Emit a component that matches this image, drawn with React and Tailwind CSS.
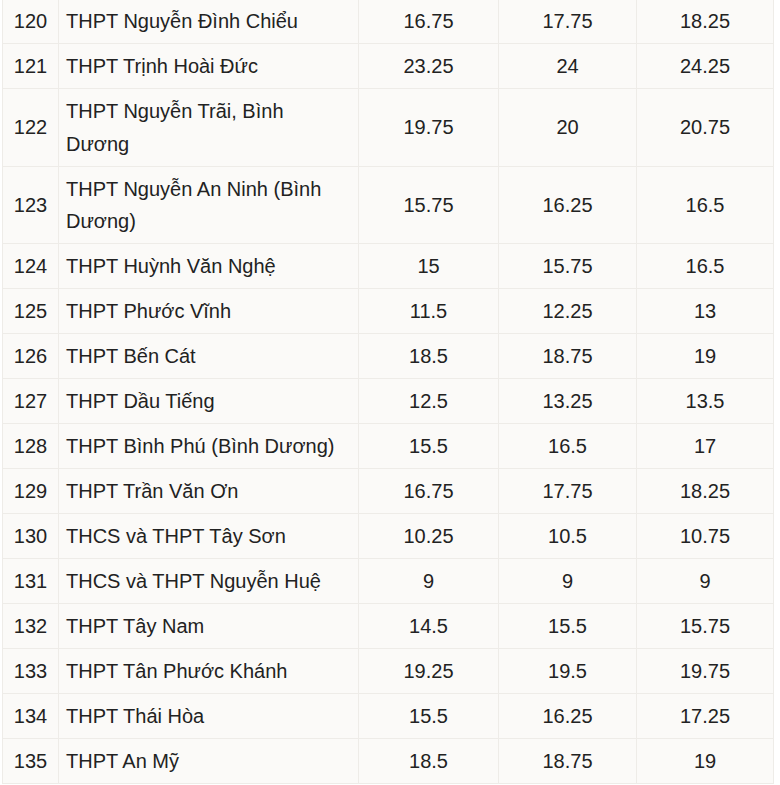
const rows = [
  ["120", "THPT Nguyễn Đình Chiểu", "16.75", "17.75", "18.25"],
  ["121", "THPT Trịnh Hoài Đức", "23.25", "24", "24.25"],
  ["122", "THPT Nguyễn Trãi, Bình Dương", "19.75", "20", "20.75"],
  ["123", "THPT Nguyễn An Ninh (Bình Dương)", "15.75", "16.25", "16.5"],
  ["124", "THPT Huỳnh Văn Nghệ", "15", "15.75", "16.5"],
  ["125", "THPT Phước Vĩnh", "11.5", "12.25", "13"],
  ["126", "THPT Bến Cát", "18.5", "18.75", "19"],
  ["127", "THPT Dầu Tiếng", "12.5", "13.25", "13.5"],
  ["128", "THPT Bình Phú (Bình Dương)", "15.5", "16.5", "17"],
  ["129", "THPT Trần Văn Ơn", "16.75", "17.75", "18.25"],
  ["130", "THCS và THPT Tây Sơn", "10.25", "10.5", "10.75"],
  ["131", "THCS và THPT Nguyễn Huệ", "9", "9", "9"],
  ["132", "THPT Tây Nam", "14.5", "15.5", "15.75"],
  ["133", "THPT Tân Phước Khánh", "19.25", "19.5", "19.75"],
  ["134", "THPT Thái Hòa", "15.5", "16.25", "17.25"],
  ["135", "THPT An Mỹ", "18.5", "18.75", "19"],
];

export default function App() {
  return (
    <div className="w-[780px] h-[785px] overflow-hidden bg-white font-['Liberation_Sans',Arial,sans-serif] text-[20px] text-[#222]">
      <table className="ml-[2px] -mt-[2px] border-collapse bg-[#fbfaf8] table-fixed w-[771px]">
        <colgroup>
          <col className="w-[56px]" />
          <col className="w-[300px]" />
          <col className="w-[140px]" />
          <col className="w-[138px]" />
          <col className="w-[137px]" />
        </colgroup>
        <tbody>
          {rows.map((r) => (
            <tr key={r[0]}>
              <td className="border border-[#eeece8] text-center leading-[32.5px] pt-[6px] pb-[5.5px] align-middle">{r[0]}</td>
              <td className="border border-[#eeece8] pl-[7px] pr-3 leading-[32.5px] pt-[6px] pb-[5.5px] align-middle">{r[1]}</td>
              <td className="border border-[#eeece8] text-center leading-[32.5px] pt-[6px] pb-[5.5px] align-middle">{r[2]}</td>
              <td className="border border-[#eeece8] text-center leading-[32.5px] pt-[6px] pb-[5.5px] align-middle">{r[3]}</td>
              <td className="border border-[#eeece8] text-center leading-[32.5px] pt-[6px] pb-[5.5px] align-middle">{r[4]}</td>
            </tr>
          ))}
        </tbody>
      </table>
    </div>
  );
}
